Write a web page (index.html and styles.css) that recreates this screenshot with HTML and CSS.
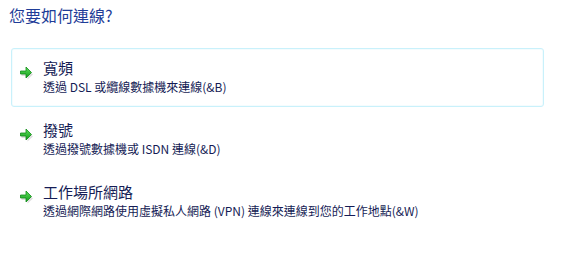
FILE: index.html
```html
<!DOCTYPE html>
<html lang="zh-Hant">
<head>
  <meta charset="UTF-8">
  <title>連線到網際網路</title>
  <link rel="stylesheet" href="styles.css">
</head>
<body>
  <div class="wizard">
    <h1 class="main-instruction">您要如何連線?</h1>
    <div class="link-list">
      <div class="cmd-link hot">
        <svg class="arrow" width="14" height="14" viewBox="0 0 14 14"><use href="#arr"/></svg>
        <div class="cmd-text">
          <div class="cmd-title">寬頻</div>
          <div class="cmd-note">透過 DSL 或纜線數據機來連線(&amp;B)</div>
        </div>
      </div>
      <div class="cmd-link">
        <svg class="arrow" width="14" height="14" viewBox="0 0 14 14"><use href="#arr"/></svg>
        <div class="cmd-text">
          <div class="cmd-title">撥號</div>
          <div class="cmd-note">透過撥號數據機或 ISDN 連線(&amp;D)</div>
        </div>
      </div>
      <div class="cmd-link">
        <svg class="arrow" width="14" height="14" viewBox="0 0 14 14"><use href="#arr"/></svg>
        <div class="cmd-text">
          <div class="cmd-title">工作場所網路</div>
          <div class="cmd-note">透過網際網路使用虛擬私人網路 (VPN) 連線來連線到您的工作地點(&amp;W)</div>
        </div>
      </div>
    </div>
  </div>
  <svg width="0" height="0" style="position:absolute">
    <defs>
      <linearGradient id="g" x1="0" y1="0" x2="0" y2="1">
        <stop offset="0" stop-color="#5ee05a"/>
        <stop offset="1" stop-color="#129a1c"/>
      </linearGradient>
      <g id="arr">
        <path d="M1.5 7 H7.5 V3.5 L13 8.5 L7.5 13.5 V10 H1.5 Z" fill="#c8c8c8" opacity="0.6"/>
        <path d="M0.5 5 H6 V1 L11.5 6.5 L6 12 V8 H0.5 Z" fill="url(#g)" stroke="#0f8a17" stroke-width="0.8" stroke-linejoin="round"/>
      </g>
    </defs>
  </svg>
</body>
</html>
```

FILE: styles.css
```css
body {
  margin: 0;
  background: #fff;
  font-family: "Noto Sans CJK TC", "Noto Sans", sans-serif;
}
.wizard {
  padding: 4px 11px 0 9px;
  width: 535px;
}
.main-instruction {
  margin: 0;
  font-size: 16px;
  font-weight: normal;
  color: #1f3d98;
  line-height: 22px;
}
.link-list {
  margin-top: 22px;
  margin-left: 2px;
  display: flex;
  flex-direction: column;
  gap: 3px;
}
.cmd-link {
  height: 59px;
  box-sizing: border-box;
  display: flex;
  align-items: flex-start;
  padding: 8px 8px 0 8px;
  border: 1px solid transparent;
  border-radius: 3px;
}
.cmd-link.hot {
  border-color: #c9f1fb;
  box-shadow: inset 0 0 0 1px #f4fcfe;
}
.arrow {
  margin-top: 9px;
  margin-right: 9px;
  flex: none;
}
.cmd-text {
  color: #151c55;
}
.cmd-title {
  font-size: 15px;
  line-height: 21px;
}
.cmd-note {
  font-size: 12px;
  line-height: 17px;
}
```
